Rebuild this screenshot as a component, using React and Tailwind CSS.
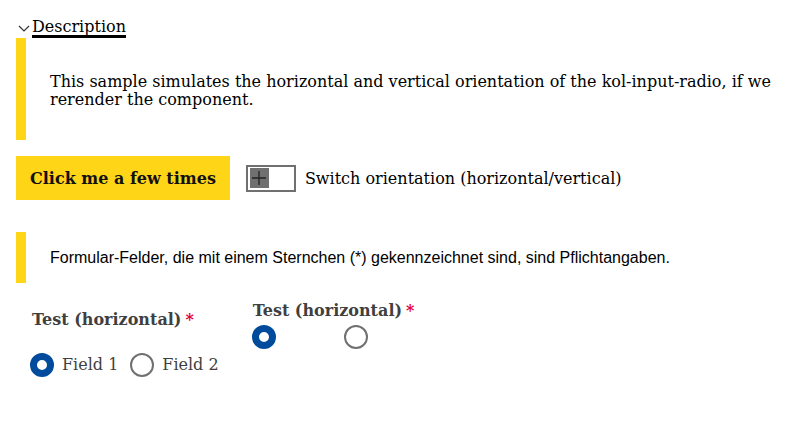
import { useState } from 'react';

function Radio({ checked }) {
  return checked ? (
    <span className="block h-6 w-6 shrink-0 rounded-full border-[7px] border-[#004b9b] bg-white" />
  ) : (
    <span className="block h-6 w-6 shrink-0 rounded-full border-2 border-[#707070] bg-white" />
  );
}

function Legend() {
  return (
    <div className="flex items-start gap-1 text-base font-bold text-[#3f3f3f] leading-[19px]">
      <span>Test (horizontal)</span>
      <span className="text-[#e4003a]">*</span>
    </div>
  );
}

export default function App() {
  const [vertical, setVertical] = useState(false);

  return (
    <div className="w-[800px] h-[439px] bg-white text-black font-['DejaVu_Serif',serif] text-base">
      {/* summary */}
      <div className="flex items-end pl-[18px] pt-[18px]">
        <svg width="12" height="10" viewBox="0 0 12 10" className="mb-[5px]">
          <path d="M1 3 L6 8 L11 3" fill="none" stroke="#333" strokeWidth="1.2" />
        </svg>
        <span className="ml-[2px] border-b-[3px] border-black leading-[17px]">Description</span>
      </div>

      {/* description card */}
      <div className="mx-4 border-l-[10px] border-[#ffd518] pt-[35px] pb-[31px] pl-6 leading-[18px]">
        This sample simulates the horizontal and vertical orientation of the kol-input-radio, if we rerender the component.
      </div>

      {/* controls */}
      <div className="mt-4 flex items-center pl-4">
        <button
          onClick={() => setVertical(!vertical)}
          className="h-[44px] bg-[#ffd518] px-[14px] pt-[2px] font-bold text-[#111]"
        >
          Click me a few times
        </button>
        <span className="ml-4 flex h-[27px] w-[50px] items-center border-2 border-[#707070] p-[2px]">
          <span className="flex h-[20px] w-[19px] items-center justify-center bg-[#707070]">
            <svg width="16" height="16" viewBox="0 0 16 16">
              <path d="M8 1 V15 M1 8 H15" stroke="#222" strokeWidth="1.3" />
            </svg>
          </span>
        </span>
        <span className="ml-[9px] pt-[2px]">Switch orientation (horizontal/vertical)</span>
      </div>

      {/* required note */}
      <div className="mx-4 mt-8 border-l-[10px] border-[#ffd518] py-4 pl-6 font-['Liberation_Sans',sans-serif] leading-[19px]">
        Formular-Felder, die mit einem Sternchen (*) gekennzeichnet sind, sind Pflichtangaben.
      </div>

      {/* fieldsets */}
      <div className="flex items-start pl-4">
        <div className="pl-4 pt-[27px]">
          <Legend />
          <div className="mt-[24px] -ml-[2px] flex items-center text-[#3f3f3f]">
            <Radio checked />
            <span className="ml-2">Field 1</span>
            <span className="ml-3 flex"><Radio /></span>
            <span className="ml-2">Field 2</span>
          </div>
        </div>
        <div className="ml-[34px] pt-[18px]">
          <Legend />
          <div className="mt-[5px] -ml-[1px] flex items-center">
            <Radio checked />
            <span className="ml-[68px] flex"><Radio /></span>
          </div>
        </div>
      </div>
    </div>
  );
}
